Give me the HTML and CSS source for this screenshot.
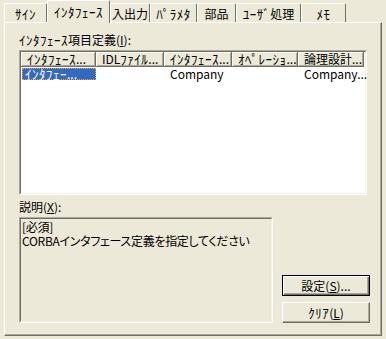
FILE: index.html
```html
<!DOCTYPE html>
<html lang="ja">
<head>
    <meta charset="UTF-8">
    <title>インタフェース</title>
<link rel="stylesheet" href="styles.css">
</head>

<body>
    <div class="tabs">
        <div class="tab tab-sign"><span class="hw">ｻｲﾝ</span></div>
        <div class="tab tab-iface active"><span class="hw">ｲﾝﾀﾌｪｰｽ</span></div>
        <div class="tab tab-io">入出力</div>
        <div class="tab tab-param"><span class="hw">ﾊﾟﾗﾒﾀ</span></div>
        <div class="tab tab-parts">部品</div>
        <div class="tab tab-user"><span class="hw">ﾕｰｻﾞ</span>処理</div>
        <div class="tab tab-memo"><span class="hw">ﾒﾓ</span></div>
    </div>

    <div class="panel">
        <div class="label"><span class="hw">ｲﾝﾀﾌｪｰｽ</span>項目定義(<u>I</u>):</div>
        <div class="list">
            <div class="list-inner">
                <div class="list-head">
                    <div class="col c1"><span class="hw">ｲﾝﾀﾌｪｰｽ</span>...</div>
                    <div class="col c2">IDL<span class="hw">ﾌｧｲﾙ</span>...</div>
                    <div class="col c3"><span class="hw">ｲﾝﾀﾌｪｰｽ</span>...</div>
                    <div class="col c4"><span class="hw">ｵﾍﾟﾚｰｼｮ</span>...</div>
                    <div class="col c5">論理設計...</div>
                </div>
                <div class="list-row">
                    <div class="cell c1"><span class="selected"><span class="hw">ｲﾝﾀﾌｪｰ</span>...</span></div>
                    <div class="cell c2"></div>
                    <div class="cell c3">Company</div>
                    <div class="cell c4"></div>
                    <div class="cell c5">Company...</div>
                </div>
            </div>
        </div>

        <div class="label label-desc">説明(<u>X</u>):</div>
        <div class="bottom">
            <div class="desc">
                <div class="desc-inner">[必須]<br>CORBAインタフェース定義を指定してください</div>
            </div>
            <div class="buttons">
                <button class="btn default">設定(<u>S</u>)...</button>
                <button class="btn"><span class="hw">ｸﾘｱ</span>(<u>L</u>)</button>
            </div>
        </div>
    </div>
</body>
</html>
```

FILE: styles.css
```css
body {
    margin: 0;
    width: 386px;
    height: 339px;
    overflow: hidden;
    background-color: #ece9d8;
    font-family: "Noto Sans CJK JP", "Liberation Sans", sans-serif;
    font-size: 12px;
    color: #000;
}

/* half-width kana are a bit wider in the original UI font */
.hw {
    font-size: 13px;
    letter-spacing: 0.5px;
}

/* tab strip */
.tabs {
    display: flex;
    align-items: flex-end;
    height: 22px;
    padding-left: 4px;
}

.tab {
    box-sizing: border-box;
    height: 19px;
    padding-top: 3px;
    line-height: 14px;
    text-align: center;
    white-space: nowrap;
    border-top: 1px solid #fff;
    border-left: 1px solid #fff;
    border-right: 1px solid #716f64;
    border-radius: 2px 2px 0 0;
}

.tab.active {
    position: relative;
    z-index: 1;
    height: 23px;
    padding-top: 4px;
    margin-bottom: -1px;
    background-color: #ece9d8;
}

.tab-sign { width: 43px; }
.tab-iface { width: 63px; }
.tab-io { width: 40px; }
.tab-param { width: 47px; }
.tab-parts { width: 39px; }
.tab-user { width: 65px; }
.tab-memo { width: 45px; }

/* page */
.panel {
    box-sizing: border-box;
    width: 378px;
    height: 314px;
    margin-left: 4px;
    padding: 10px 0 12px 14px;
    border-top: 1px solid #fff;
    border-left: 1px solid #fff;
    border-right: 1px solid #716f64;
    border-bottom: 1px solid #716f64;
    box-shadow: inset -1px -1px 0 #aca899;
}

.label {
    line-height: 14px;
    height: 14px;
    white-space: nowrap;
}

.label-desc {
    margin-top: 5px;
}

/* list view */
.list {
    box-sizing: border-box;
    width: 348px;
    height: 145px;
    margin-top: 3px;
    border: 1px solid;
    border-color: #aca899 #fff #fff #aca899;
}

.list-inner {
    box-sizing: border-box;
    height: 100%;
    background-color: #fff;
    border: 1px solid;
    border-color: #716f64 #f1efe2 #f1efe2 #716f64;
}

.list-head,
.list-row {
    display: flex;
}

.col {
    box-sizing: border-box;
    height: 15px;
    line-height: 13px;
    padding-left: 6px;
    white-space: nowrap;
    background-color: #ece9d8;
    border-right: 1px solid #716f64;
    border-bottom: 1px solid #716f64;
    box-shadow: inset 1px 1px 0 #fff, inset -1px -1px 0 #aca899;
}

.list-row {
    margin-top: 1px;
    height: 12px;
    line-height: 12px;
}

.cell {
    box-sizing: border-box;
    padding-left: 6px;
    white-space: nowrap;
}

.cell.c1 {
    padding-left: 1px;
}

.selected {
    display: block;
    box-sizing: border-box;
    height: 12px;
    line-height: 10px;
    padding-left: 2px;
    background-color: #316ac5;
    color: #fff;
    border: 1px dotted #e8a040;
}

.c1 { width: 75px; }
.c2 { width: 68px; }
.c3 { width: 68px; }
.c4 { width: 66px; }
.c5 { width: 66px; }

/* description and buttons */
.bottom {
    display: flex;
    align-items: flex-end;
    gap: 9px;
    margin-top: 3px;
}

.desc {
    box-sizing: border-box;
    width: 254px;
    height: 106px;
    border: 1px solid;
    border-color: #aca899 #fff #fff #aca899;
}

.desc-inner {
    box-sizing: border-box;
    height: 100%;
    padding: 1px 0 0 1px;
    line-height: 14px;
    letter-spacing: -0.3px;
    font-feature-settings: "palt";
    border: 1px solid;
    border-color: #716f64 #f1efe2 #f1efe2 #716f64;
}

.buttons {
    display: flex;
    flex-direction: column;
    gap: 6px;
}

.btn {
    box-sizing: border-box;
    width: 88px;
    height: 21px;
    padding: 0;
    font-family: inherit;
    font-size: 12px;
    line-height: 14px;
    color: #000;
    background-color: #ece9d8;
    border: 1px solid;
    border-color: #fff #716f64 #716f64 #fff;
    box-shadow: inset -1px -1px 0 #aca899;
    border-radius: 0;
}

.btn.default {
    border-color: #000;
    box-shadow: inset 1px 1px 0 #fff, inset -1px -1px 0 #716f64, inset -2px -2px 0 #aca899;
}
```
